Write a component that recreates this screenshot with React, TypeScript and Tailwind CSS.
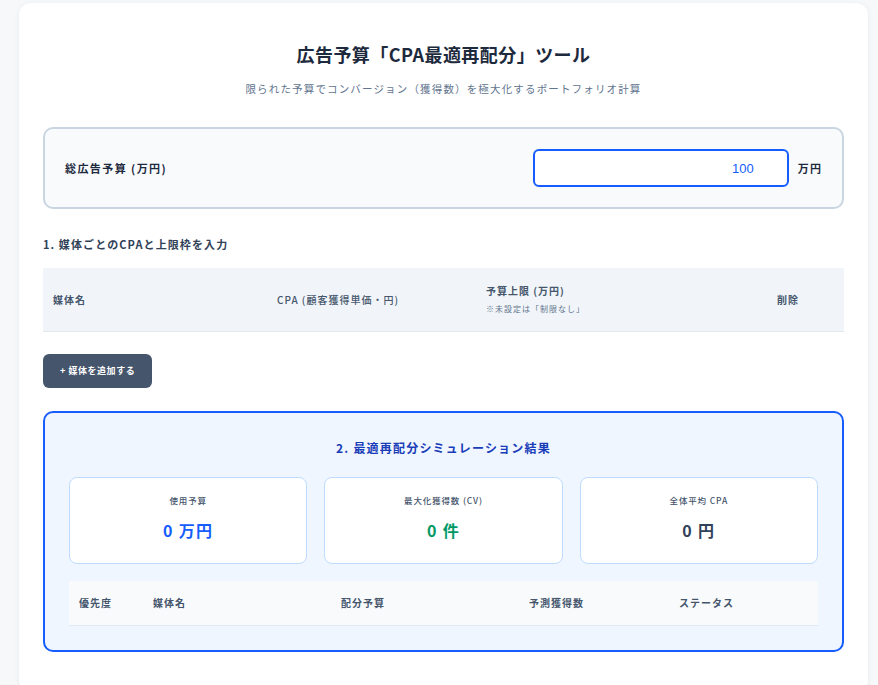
export default function App() {
  const font = { fontFamily: '"Noto Sans CJK JP", "Noto Sans", sans-serif' };
  return (
    <div className="min-h-screen bg-[#f7f8fa] pl-[19px] pr-[10px] pt-[3px]" style={font}>
      <div className="bg-white rounded-xl shadow-[0_1px_6px_rgba(0,0,0,0.06)] px-6 pt-[37px] pb-10">
        <h1 className="text-center text-[18px] leading-[28px] font-bold text-slate-800 tracking-wide">
          広告予算「CPA最適再配分」ツール
        </h1>
        <p className="text-center text-[10.5px] leading-4 text-slate-500 tracking-[0.11em] mt-[13px]">
          限られた予算でコンバージョン（獲得数）を極大化するポートフォリオ計算
        </p>

        {/* budget */}
        <div className="mt-[30px] border-2 border-slate-300 bg-slate-50 rounded-[10px] px-5 py-5 flex items-center">
          <span className="text-[11px] font-bold text-slate-800 tracking-[0.13em] flex-1">総広告予算 (万円)</span>
          <input
            readOnly
            value="100"
            className="w-[256px] h-[38px] border-2 border-blue-600 rounded-md bg-white text-right pr-[33px] text-[13px] text-blue-600 font-medium outline-none"
            style={{ fontFamily: '"Liberation Sans", Arial, sans-serif' }}
          />
          <span className="ml-[9px] text-[11px] font-bold text-slate-800 tracking-[0.1em]">万円</span>
        </div>

        {/* section 1 */}
        <h2 className="mt-[27px] text-[11px] leading-4 font-bold text-slate-700 tracking-[0.1em]">
          1. 媒体ごとのCPAと上限枠を入力
        </h2>
        <table className="mt-[16px] w-full table-fixed border-collapse">
          <thead>
            <tr className="bg-slate-100 border-b border-slate-200 h-[63px] text-left text-[10px] font-bold text-slate-600 tracking-[0.1em]">
              <th className="w-[234px] pl-[10px] font-bold">媒体名</th>
              <th className="w-[209px] font-medium">CPA (顧客獲得単価・円)</th>
              <th className="w-[291px] font-bold">
                <div>予算上限 (万円)</div>
                <div className="text-[8px] font-normal text-slate-500 mt-[5px]">※未設定は「制限なし」</div>
              </th>
              <th className="font-bold">削除</th>
            </tr>
          </thead>
          <tbody></tbody>
        </table>
        <button className="mt-[22px] h-[34px] px-[17px] bg-slate-600 text-white text-[9px] font-bold rounded-md tracking-[0.06em]">
          + 媒体を追加する
        </button>

        {/* section 2 */}
        <div className="mt-[23px] border-2 border-blue-600 bg-blue-50 rounded-[10px] p-6">
          <h2 className="text-center text-[12px] leading-[22px] font-bold text-blue-800 tracking-[0.1em]">
            2. 最適再配分シミュレーション結果
          </h2>
          <div className="mt-[18px] grid grid-cols-3 gap-[17px]">
            <StatCard label="使用予算" value="0 万円" color="text-blue-600" />
            <StatCard label="最大化獲得数 (CV)" value="0 件" color="text-emerald-600" />
            <StatCard label="全体平均 CPA" value="0 円" color="text-slate-700" />
          </div>
          <table className="mt-[17px] w-full table-fixed border-collapse">
            <thead>
              <tr className="bg-slate-50 border-b border-slate-200 h-[45px] text-left text-[10px] font-bold text-slate-600 tracking-[0.1em]">
                <th className="w-[84px] pl-[10px] font-bold">優先度</th>
                <th className="w-[188px] font-bold">媒体名</th>
                <th className="w-[188px] font-bold">配分予算</th>
                <th className="w-[150px] font-bold">予測獲得数</th>
                <th className="font-bold">ステータス</th>
              </tr>
            </thead>
            <tbody></tbody>
          </table>
        </div>
      </div>
    </div>
  );
}

function StatCard({ label, value, color }: { label: string; value: string; color: string }) {
  return (
    <div className="h-[87px] bg-white border border-blue-200 rounded-lg flex flex-col items-center pt-[14px]">
      <div className="text-[8.5px] leading-4 text-slate-600 font-medium tracking-[0.1em]">{label}</div>
      <div className={`mt-[10px] text-[16px] leading-6 font-bold tracking-[0.08em] ${color}`}>{value}</div>
    </div>
  );
}
